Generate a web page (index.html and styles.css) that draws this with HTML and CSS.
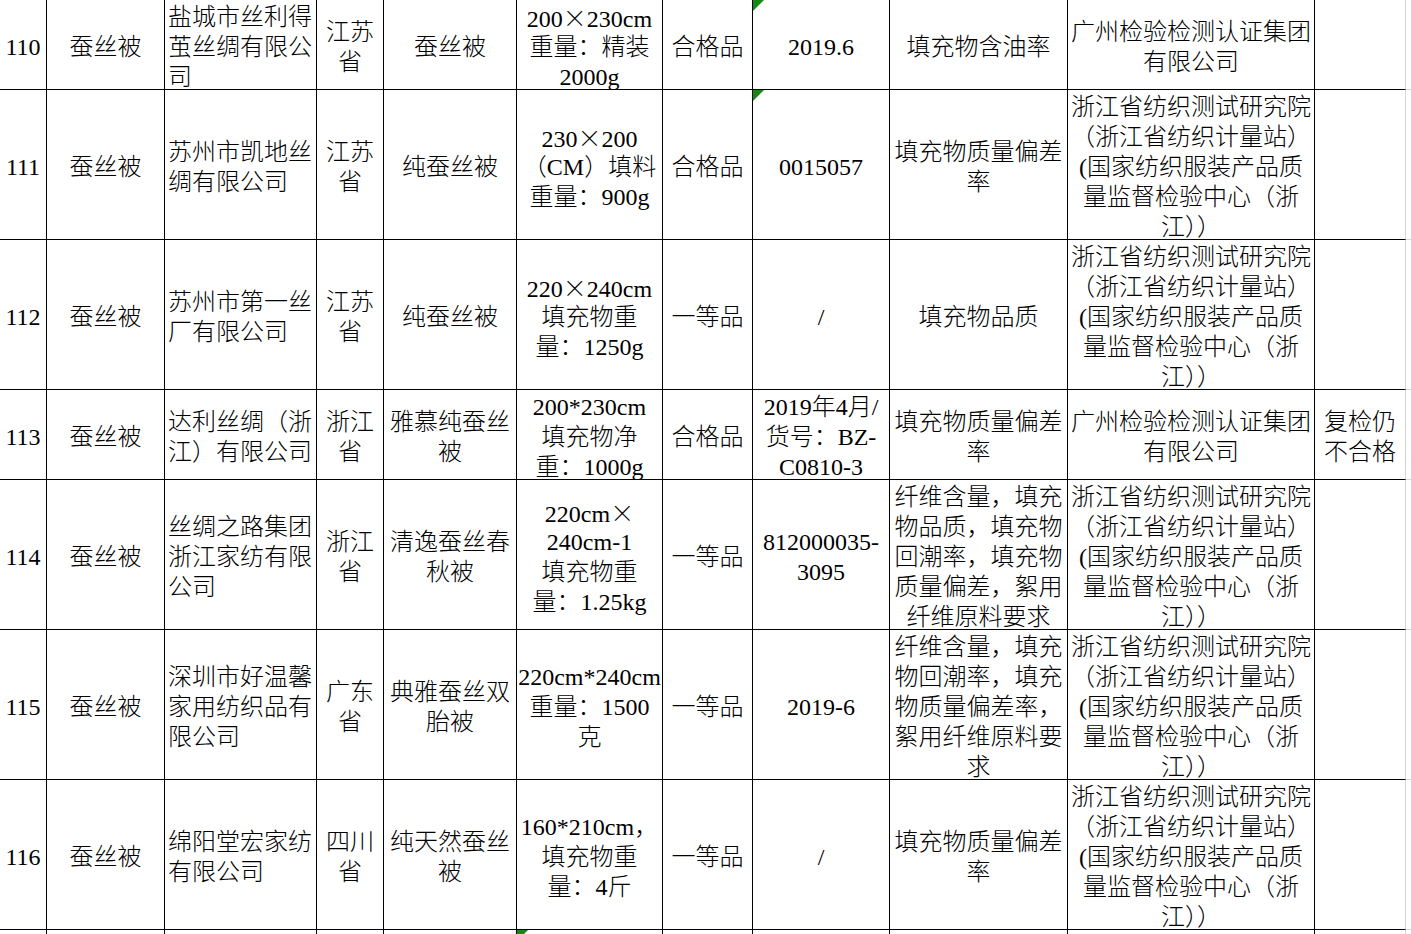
FILE: index.html
```html
<!DOCTYPE html>
<html lang="zh-CN">
<head>
<meta charset="utf-8">
<title>蚕丝被 抽检结果</title>
<link rel="stylesheet" href="styles.css">
</head>
<body>
<div class="sheet">
  <!-- 110 -->
  <div class="c"><span>110</span></div>
  <div class="c"><span>蚕丝被</span></div>
  <div class="c l"><span>盐城市丝利得</span><span>茧丝绸有限公</span><span>司</span></div>
  <div class="c"><span>江苏</span><span>省</span></div>
  <div class="c"><span>蚕丝被</span></div>
  <div class="c"><span>200<i class="fw">×</i>230cm</span><span>重量：精装</span><span>2000g</span></div>
  <div class="c"><span>合格品</span></div>
  <div class="c flag"><span>2019.6</span></div>
  <div class="c"><span>填充物含油率</span></div>
  <div class="c"><span>广州检验检测认证集团</span><span>有限公司</span></div>
  <div class="c end"></div>
  <div class="c x"></div>

  <!-- 111 -->
  <div class="c"><span>111</span></div>
  <div class="c"><span>蚕丝被</span></div>
  <div class="c l"><span>苏州市凯地丝</span><span>绸有限公司</span></div>
  <div class="c"><span>江苏</span><span>省</span></div>
  <div class="c"><span>纯蚕丝被</span></div>
  <div class="c"><span>230<i class="fw">×</i>200</span><span>（CM）填料</span><span>重量：900g</span></div>
  <div class="c"><span>合格品</span></div>
  <div class="c flag"><span>0015057</span></div>
  <div class="c"><span>填充物质量偏差</span><span>率</span></div>
  <div class="c"><span>浙江省纺织测试研究院</span><span>（浙江省纺织计量站）</span><span>(国家纺织服装产品质</span><span>量监督检验中心（浙</span><span>江））</span></div>
  <div class="c end"></div>
  <div class="c x"></div>

  <!-- 112 -->
  <div class="c"><span>112</span></div>
  <div class="c"><span>蚕丝被</span></div>
  <div class="c l"><span>苏州市第一丝</span><span>厂有限公司</span></div>
  <div class="c"><span>江苏</span><span>省</span></div>
  <div class="c"><span>纯蚕丝被</span></div>
  <div class="c"><span>220<i class="fw">×</i>240cm</span><span>填充物重</span><span>量：1250g</span></div>
  <div class="c"><span>一等品</span></div>
  <div class="c"><span>/</span></div>
  <div class="c"><span>填充物品质</span></div>
  <div class="c"><span>浙江省纺织测试研究院</span><span>（浙江省纺织计量站）</span><span>(国家纺织服装产品质</span><span>量监督检验中心（浙</span><span>江））</span></div>
  <div class="c end"></div>
  <div class="c x"></div>

  <!-- 113 -->
  <div class="c"><span>113</span></div>
  <div class="c"><span>蚕丝被</span></div>
  <div class="c l"><span>达利丝绸（浙</span><span>江）有限公司</span></div>
  <div class="c"><span>浙江</span><span>省</span></div>
  <div class="c"><span>雅慕纯蚕丝</span><span>被</span></div>
  <div class="c"><span>200*230cm</span><span>填充物净</span><span>重：1000g</span></div>
  <div class="c"><span>合格品</span></div>
  <div class="c"><span>2019年4月/</span><span>货号：BZ-</span><span>C0810-3</span></div>
  <div class="c"><span>填充物质量偏差</span><span>率</span></div>
  <div class="c"><span>广州检验检测认证集团</span><span>有限公司</span></div>
  <div class="c end"><span>复检仍</span><span>不合格</span></div>
  <div class="c x"></div>

  <!-- 114 -->
  <div class="c"><span>114</span></div>
  <div class="c"><span>蚕丝被</span></div>
  <div class="c l"><span>丝绸之路集团</span><span>浙江家纺有限</span><span>公司</span></div>
  <div class="c"><span>浙江</span><span>省</span></div>
  <div class="c"><span>清逸蚕丝春</span><span>秋被</span></div>
  <div class="c"><span>220cm<i class="fw">×</i></span><span>240cm-1</span><span>填充物重</span><span>量：1.25kg</span></div>
  <div class="c"><span>一等品</span></div>
  <div class="c"><span>812000035-</span><span>3095</span></div>
  <div class="c"><span>纤维含量，填充</span><span>物品质，填充物</span><span>回潮率，填充物</span><span>质量偏差，絮用</span><span>纤维原料要求</span></div>
  <div class="c"><span>浙江省纺织测试研究院</span><span>（浙江省纺织计量站）</span><span>(国家纺织服装产品质</span><span>量监督检验中心（浙</span><span>江））</span></div>
  <div class="c end"></div>
  <div class="c x"></div>

  <!-- 115 -->
  <div class="c"><span>115</span></div>
  <div class="c"><span>蚕丝被</span></div>
  <div class="c l"><span>深圳市好温馨</span><span>家用纺织品有</span><span>限公司</span></div>
  <div class="c"><span>广东</span><span>省</span></div>
  <div class="c"><span>典雅蚕丝双</span><span>胎被</span></div>
  <div class="c"><span>220cm*240cm</span><span>重量：1500</span><span>克</span></div>
  <div class="c"><span>一等品</span></div>
  <div class="c"><span>2019-6</span></div>
  <div class="c"><span>纤维含量，填充</span><span>物回潮率，填充</span><span>物质量偏差率，</span><span>絮用纤维原料要</span><span>求</span></div>
  <div class="c"><span>浙江省纺织测试研究院</span><span>（浙江省纺织计量站）</span><span>(国家纺织服装产品质</span><span>量监督检验中心（浙</span><span>江））</span></div>
  <div class="c end"></div>
  <div class="c x"></div>

  <!-- 116 -->
  <div class="c"><span>116</span></div>
  <div class="c"><span>蚕丝被</span></div>
  <div class="c l"><span>绵阳堂宏家纺</span><span>有限公司</span></div>
  <div class="c"><span>四川</span><span>省</span></div>
  <div class="c"><span>纯天然蚕丝</span><span>被</span></div>
  <div class="c"><span>160*210cm，</span><span>填充物重</span><span>量：4斤</span></div>
  <div class="c"><span>一等品</span></div>
  <div class="c"><span>/</span></div>
  <div class="c"><span>填充物质量偏差</span><span>率</span></div>
  <div class="c"><span>浙江省纺织测试研究院</span><span>（浙江省纺织计量站）</span><span>(国家纺织服装产品质</span><span>量监督检验中心（浙</span><span>江））</span></div>
  <div class="c end"></div>
  <div class="c x"></div>

  <!-- 117 (partial) -->
  <div class="c"></div>
  <div class="c"></div>
  <div class="c"></div>
  <div class="c"></div>
  <div class="c"></div>
  <div class="c flag"></div>
  <div class="c"></div>
  <div class="c"></div>
  <div class="c"></div>
  <div class="c"></div>
  <div class="c end"></div>
  <div class="c x"></div>
</div>
</body>
</html>
```

FILE: styles.css
```css
html, body {
  margin: 0;
  padding: 0;
  background: #fff;
  overflow: hidden;
}

.sheet {
  display: grid;
  grid-template-columns: 47px 118px 152px 67px 133px 146px 90px 137px 178px 247px 91px 20px;
  grid-template-rows: 90px 150px 150px 90px 150px 150px 150px 30px;
  width: 1426px;
  font-family: "Liberation Serif", "Noto Sans CJK SC", serif;
  font-size: 24px;
  font-weight: 300;
  line-height: 30px;
  color: #000;
}

.c {
  box-sizing: border-box;
  border-right: 1px solid #000;
  border-bottom: 1px solid #000;
  display: flex;
  flex-direction: column;
  justify-content: center;
  align-items: center;
  padding-top: 4px;
  position: relative;
}

.c > span {
  display: block;
  height: 30px;
  white-space: nowrap;
}

.l {
  align-items: flex-start;
  padding-left: 3px;
}

.end {
  border-right-color: #d4d4d4;
}

.x {
  border-right: none;
  border-bottom-color: #d4d4d4;
}

.fw {
  font-style: normal;
  display: inline-block;
  width: 24px;
  text-align: center;
  font-family: "Noto Sans CJK SC", sans-serif;
}

.flag::before {
  content: "";
  position: absolute;
  left: 0;
  top: 0;
  width: 0;
  height: 0;
  border-style: solid;
  border-width: 11px 11px 0 0;
  border-color: #138a13 transparent transparent transparent;
}
```
